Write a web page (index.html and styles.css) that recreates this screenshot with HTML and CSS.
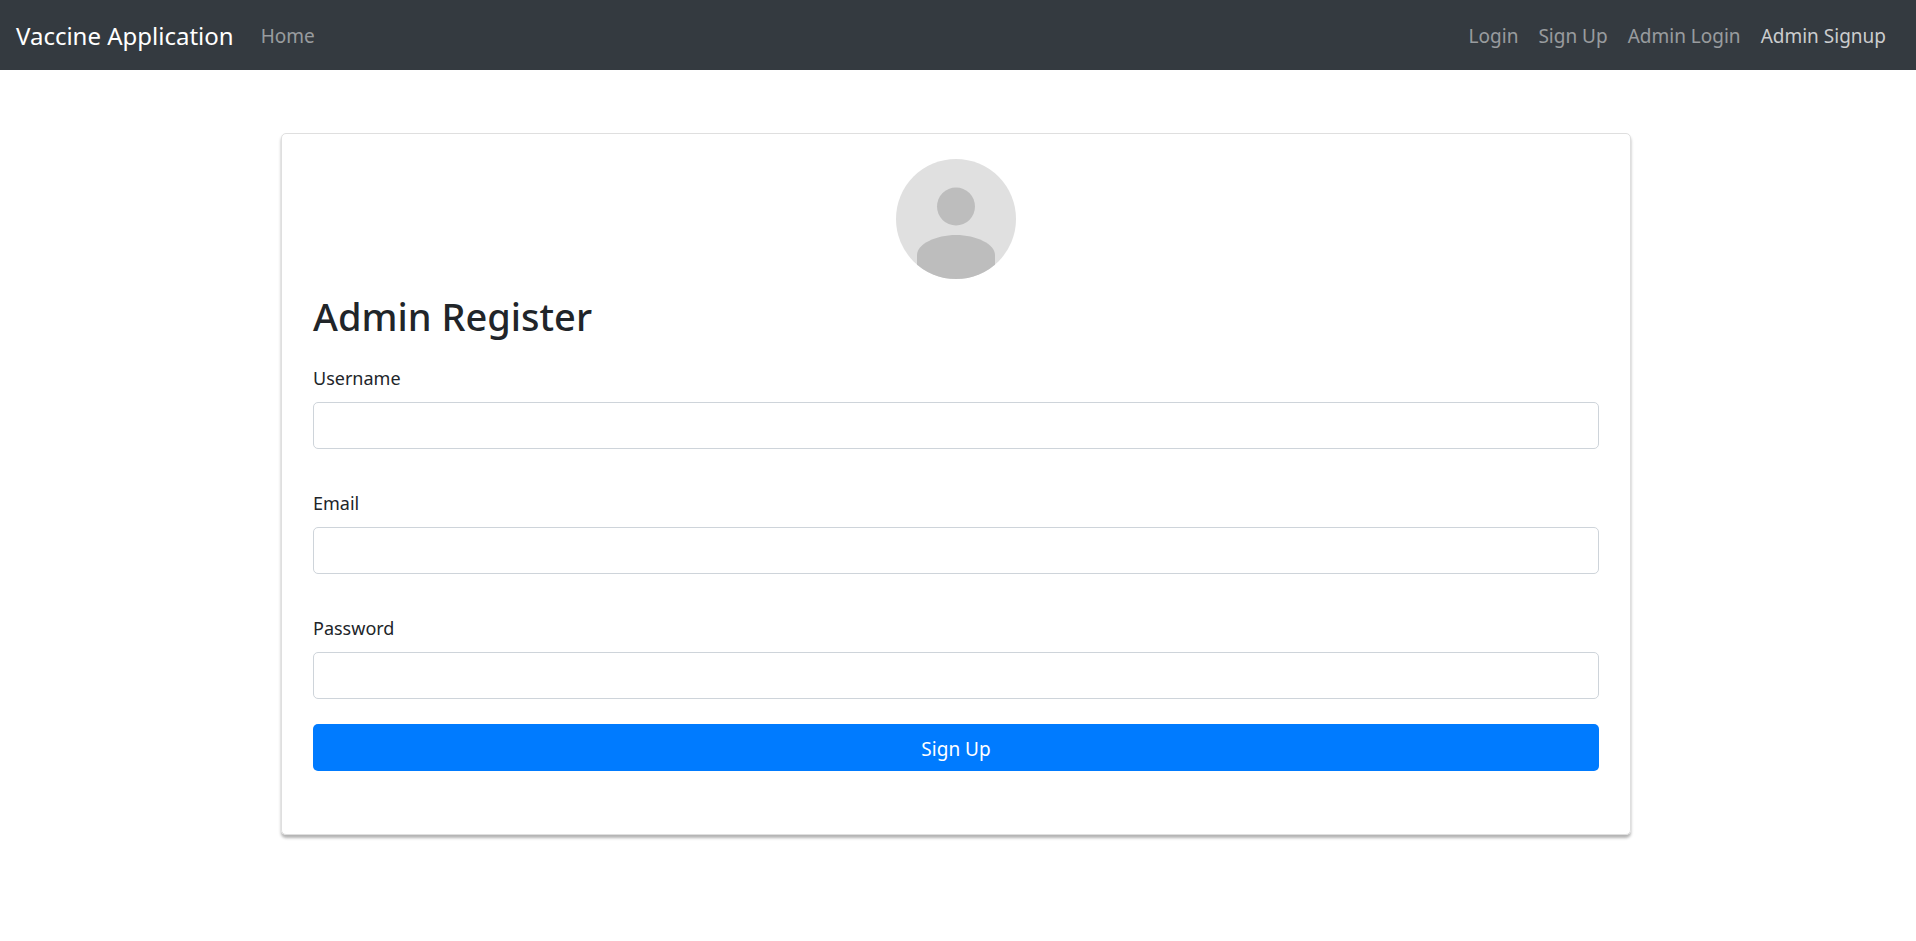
FILE: index.html
```html
<!DOCTYPE html>
<html lang="en">
<head>
<meta charset="utf-8">
<meta name="viewport" content="width=device-width, initial-scale=1">
<title>Vaccine Application</title>
<link rel="stylesheet" href="styles.css">
</head>
<body>
<nav class="navbar">
  <a class="brand" href="#">Vaccine Application</a>
  <div class="nav-group">
    <a class="nav-link" href="#">Home</a>
  </div>
  <div class="nav-group nav-end">
    <a class="nav-link" href="#">Login</a>
    <a class="nav-link" href="#">Sign Up</a>
    <a class="nav-link" href="#">Admin Login</a>
    <a class="nav-link active" href="#">Admin Signup</a>
  </div>
</nav>
<main class="page">
  <section class="card">
    <svg class="avatar" viewBox="0 0 120 120" aria-hidden="true">
      <defs><clipPath id="disc"><circle cx="60" cy="60" r="60"/></clipPath></defs>
      <circle cx="60" cy="60" r="60" fill="#e0e0e0"/>
      <g clip-path="url(#disc)" fill="#bdbdbd">
        <circle cx="60" cy="47.5" r="19"/>
        <path d="M21 120V96C21 85 40 76 60 76S99 85 99 96V120Z"/>
      </g>
    </svg>
    <h1 class="title">Admin Register</h1>
    <form class="form">
      <div class="field">
        <label for="username">Username</label>
        <input id="username" type="text">
      </div>
      <div class="field">
        <label for="email">Email</label>
        <input id="email" type="email">
      </div>
      <div class="field">
        <label for="password">Password</label>
        <input id="password" type="password">
      </div>
      <button class="submit" type="submit">Sign Up</button>
    </form>
  </section>
</main>
</body>
</html>
```
FILE: styles.css
```css
* {
  box-sizing: border-box;
}

body {
  margin: 0;
  background: #fff;
  color: #212529;
  font-family: "Noto Sans", "Open Sans", sans-serif;
  font-size: 19px;
  line-height: 30px;
}

.navbar {
  display: flex;
  align-items: center;
  padding: 11px 20px 9px 16px;
  background: #343a40;
}

.navbar a {
  text-decoration: none;
}

.brand {
  margin-right: 17px;
  color: #fff;
  font-size: 24px;
}

.nav-group {
  display: flex;
}

.nav-end {
  margin-left: auto;
}

.nav-link {
  padding: 10px;
  color: rgba(255, 255, 255, 0.5);
}

.nav-link.active {
  color: rgba(255, 255, 255, 0.75);
}

.page {
  padding: 63px 4px 40px 0;
}

.card {
  max-width: 1350px;
  margin: 0 auto;
  padding: 25px 31px 63px;
  border: 1px solid #dfdfdf;
  border-radius: 5px;
  box-shadow: 0 3px 3px rgba(0, 0, 0, 0.3);
}

.avatar {
  display: block;
  width: 120px;
  height: 120px;
  margin: 0 auto 13px;
}

.title {
  margin: 0 0 22px;
  font-size: 38px;
  font-weight: 500;
  line-height: 48px;
}

.field {
  margin-bottom: 38px;
}

.field:last-of-type {
  margin-bottom: 25px;
}

.field label {
  display: block;
  margin-bottom: 8px;
  font-size: 18px;
  line-height: 32px;
}

.field input {
  display: block;
  width: 100%;
  height: 47px;
  padding: 8px 15px;
  border: 1px solid #ced4da;
  border-radius: 5px;
  background: #fff;
  color: #495057;
  font: inherit;
}

.submit {
  display: block;
  width: 100%;
  height: 47px;
  padding: 9px 15px 7px;
  border: 0;
  border-radius: 5px;
  background: #007bff;
  color: #fff;
  font: inherit;
}
```
